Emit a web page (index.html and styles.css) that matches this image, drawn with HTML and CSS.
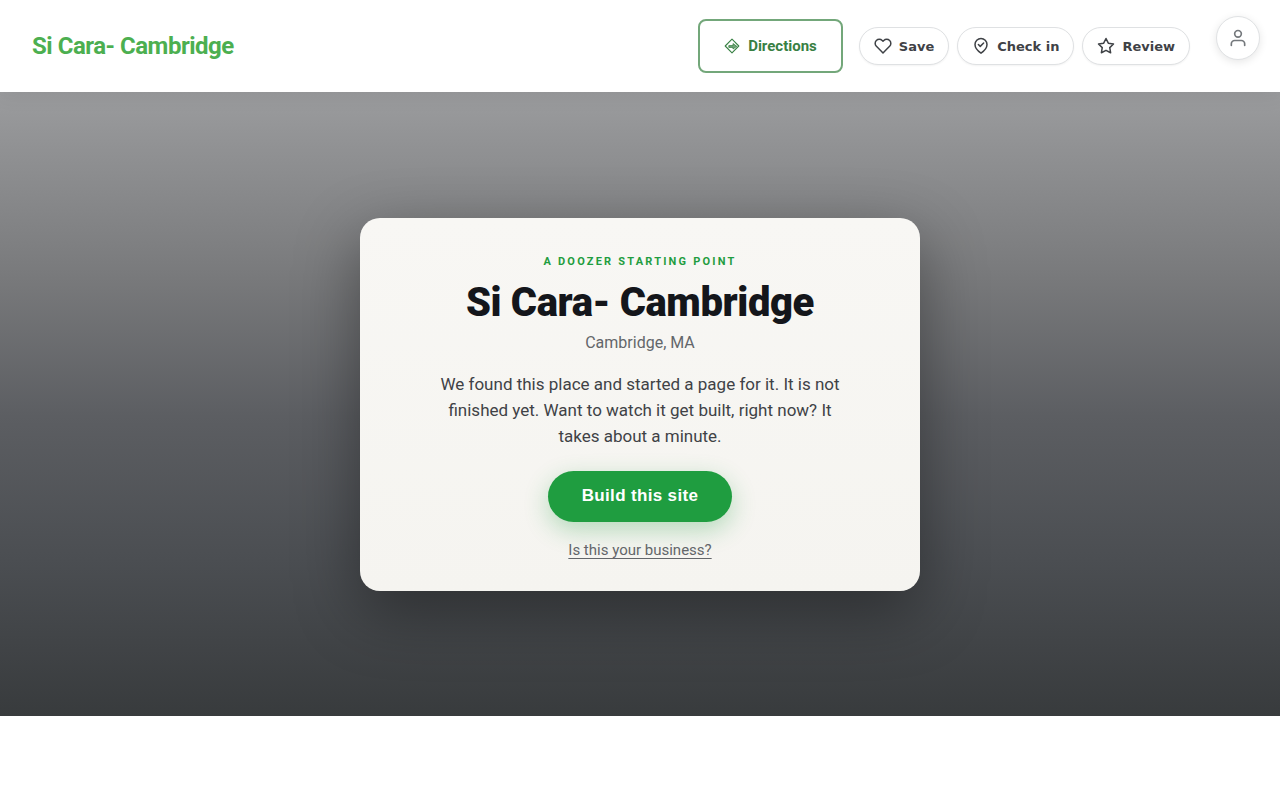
FILE: index.html
```
<!DOCTYPE html>
<html lang="en">
  <head>
    <meta charset="UTF-8" />
    <meta name="viewport" content="width=device-width, initial-scale=1.0" />
    <link rel="stylesheet" href="styles.css">
    <title>Si Cara- Cambridge</title>
  </head>
  <body>
    <header class="header">
      <a href="#" class="brand">Si Cara- Cambridge</a>
      <nav class="nav">
        <a href="#" class="directions">
          <svg width="16" height="16" viewBox="0 0 16 16" fill="none" stroke="currentColor">
            <path d="M8 1.2 14.8 8 8 14.8 1.2 8Z" stroke-width="1.1" stroke-linejoin="round" />
            <path d="M4.8 7.6h4.2V5.6L12.8 8.3 9 11V9.4H4.8Z" fill="currentColor" fill-opacity="0.7" stroke-width="0.8" />
          </svg>
          Directions
        </a>
        <div class="actions">
          <button type="button" class="pill">
            <svg class="icon" viewBox="0 0 24 24">
              <path d="M20.84 4.61a5.5 5.5 0 0 0-7.78 0L12 5.67l-1.06-1.06a5.5 5.5 0 0 0-7.78 7.78l1.06 1.06L12 21.23l7.78-7.78 1.06-1.06a5.5 5.5 0 0 0 0-7.78z" />
            </svg>
            Save
          </button>
          <button type="button" class="pill">
            <svg class="icon" viewBox="0 0 24 24">
              <path d="M12 21.5s8-5.5 8-11.5a8 8 0 0 0-16 0c0 6 8 11.5 8 11.5z" />
              <path d="M8.5 10l2.5 2.5 4.5-4.5" />
            </svg>
            Check in
          </button>
          <button type="button" class="pill">
            <svg class="icon" viewBox="0 0 24 24">
              <path d="M12 2l3.09 6.26L22 9.27l-5 4.87 1.18 6.88L12 17.77l-6.18 3.25L7 14.14 2 9.27l6.91-1.01L12 2z" />
            </svg>
            Review
          </button>
        </div>
      </nav>
      <button type="button" class="account" aria-label="Account">
        <svg class="account-icon" viewBox="0 0 24 24">
          <path d="M20 21v-2a4 4 0 0 0-4-4H8a4 4 0 0 0-4 4v2" />
          <circle cx="12" cy="7" r="4" />
        </svg>
      </button>
    </header>

    <main class="hero">
      <section class="card">
        <p class="eyebrow">A Doozer starting point</p>
        <h1 class="title">Si Cara- Cambridge</h1>
        <p class="place">Cambridge, MA</p>
        <p class="text">We found this place and started a page for it. It is not finished yet. Want to watch it get built, right now? It takes about a minute.</p>
        <button type="button" class="build">Build this site</button>
        <a href="#" class="claim">Is this your business?</a>
      </section>
    </main>
  </body>
</html>
```
FILE: styles.css
```
* {
  box-sizing: border-box;
}
body {
  margin: 0;
  background: #fff;
  font-family: Roboto, "Liberation Sans", sans-serif;
  color: #3f4246;
}
.header {
  position: relative;
  display: flex;
  justify-content: space-between;
  align-items: center;
  padding: 19px 90px 19px 32px;
  background: #fff;
  box-shadow: 0 2px 20px rgba(0, 0, 0, 0.08);
  z-index: 1;
}
.brand {
  font-size: 24px;
  font-weight: 700;
  letter-spacing: -0.02em;
  color: #4caf50;
  text-decoration: none;
}
.nav {
  display: flex;
  align-items: center;
  gap: 16px;
}
.directions {
  display: flex;
  align-items: center;
  gap: 8px;
  padding: 15px 24px;
  border: 2px solid #73a77a;
  border-radius: 8px;
  font-size: 15px;
  line-height: 20px;
  font-weight: 700;
  color: #388043;
  text-decoration: none;
}
.actions {
  display: flex;
  gap: 8px;
}
.pill {
  display: flex;
  align-items: center;
  gap: 7px;
  height: 38px;
  padding: 0 14px;
  border: 1px solid #dfe1e3;
  border-radius: 19px;
  background: #fff;
  font-family: "DejaVu Sans", sans-serif;
  font-size: 13px;
  font-weight: 700;
  color: #3f4246;
  box-shadow: 0 1px 2px rgba(0, 0, 0, 0.05);
}
.icon {
  width: 18px;
  height: 18px;
  fill: none;
  stroke: currentColor;
  stroke-width: 2;
  stroke-linecap: round;
  stroke-linejoin: round;
}
/* floats over the header corner */
.account {
  position: absolute;
  top: 16px;
  right: 20px;
  display: flex;
  justify-content: center;
  align-items: center;
  width: 44px;
  height: 44px;
  padding: 0;
  border: 1px solid #e0e2e4;
  border-radius: 50%;
  background: #fff;
  color: #74787c;
  box-shadow: 0 2px 8px rgba(0, 0, 0, 0.1);
}
.account-icon {
  width: 20px;
  height: 20px;
  fill: none;
  stroke: currentColor;
  stroke-width: 2;
  stroke-linecap: round;
  stroke-linejoin: round;
}
.hero {
  display: flex;
  justify-content: center;
  align-items: center;
  min-height: 78vh;
  background: linear-gradient(#9b9c9e, #78797b 30%, #5c5e62 52%, #4b4e52 75%, #383b3d);
}
.card {
  display: flex;
  flex-direction: column;
  align-items: center;
  width: 100%;
  max-width: 560px;
  padding: 37px 40px 31px;
  border-radius: 20px;
  background: linear-gradient(#f8f7f4, #f5f4f0);
  box-shadow: 0 20px 64px rgba(0, 0, 0, 0.38);
  text-align: center;
}
.eyebrow {
  margin: 0 0 12px;
  font-size: 11px;
  line-height: 14px;
  font-weight: 700;
  letter-spacing: 0.2em;
  text-transform: uppercase;
  color: #1f9d40;
}
.title {
  margin: 0 0 8px;
  font-size: 40px;
  line-height: 44px;
  font-weight: 900;
  letter-spacing: -0.01em;
  color: #14161b;
}
.place {
  margin: 0 0 18px;
  font-size: 16px;
  line-height: 20px;
  color: #63666a;
}
.text {
  max-width: 420px;
  margin: 0 0 22px;
  font-size: 17px;
  line-height: 26px;
}
.build {
  height: 51px;
  margin-bottom: 18px;
  padding: 0 34px;
  border: 0;
  border-radius: 26px;
  background: #1f9d40;
  font-family: "Liberation Sans", Arial, sans-serif;
  font-size: 17px;
  font-weight: 700;
  letter-spacing: 0.02em;
  color: #fff;
  box-shadow: 0 8px 24px rgba(31, 157, 64, 0.3);
}
.claim {
  font-size: 15px;
  line-height: 20px;
  color: #63666a;
  text-underline-offset: 3px;
  text-decoration-skip-ink: none;
}
```
